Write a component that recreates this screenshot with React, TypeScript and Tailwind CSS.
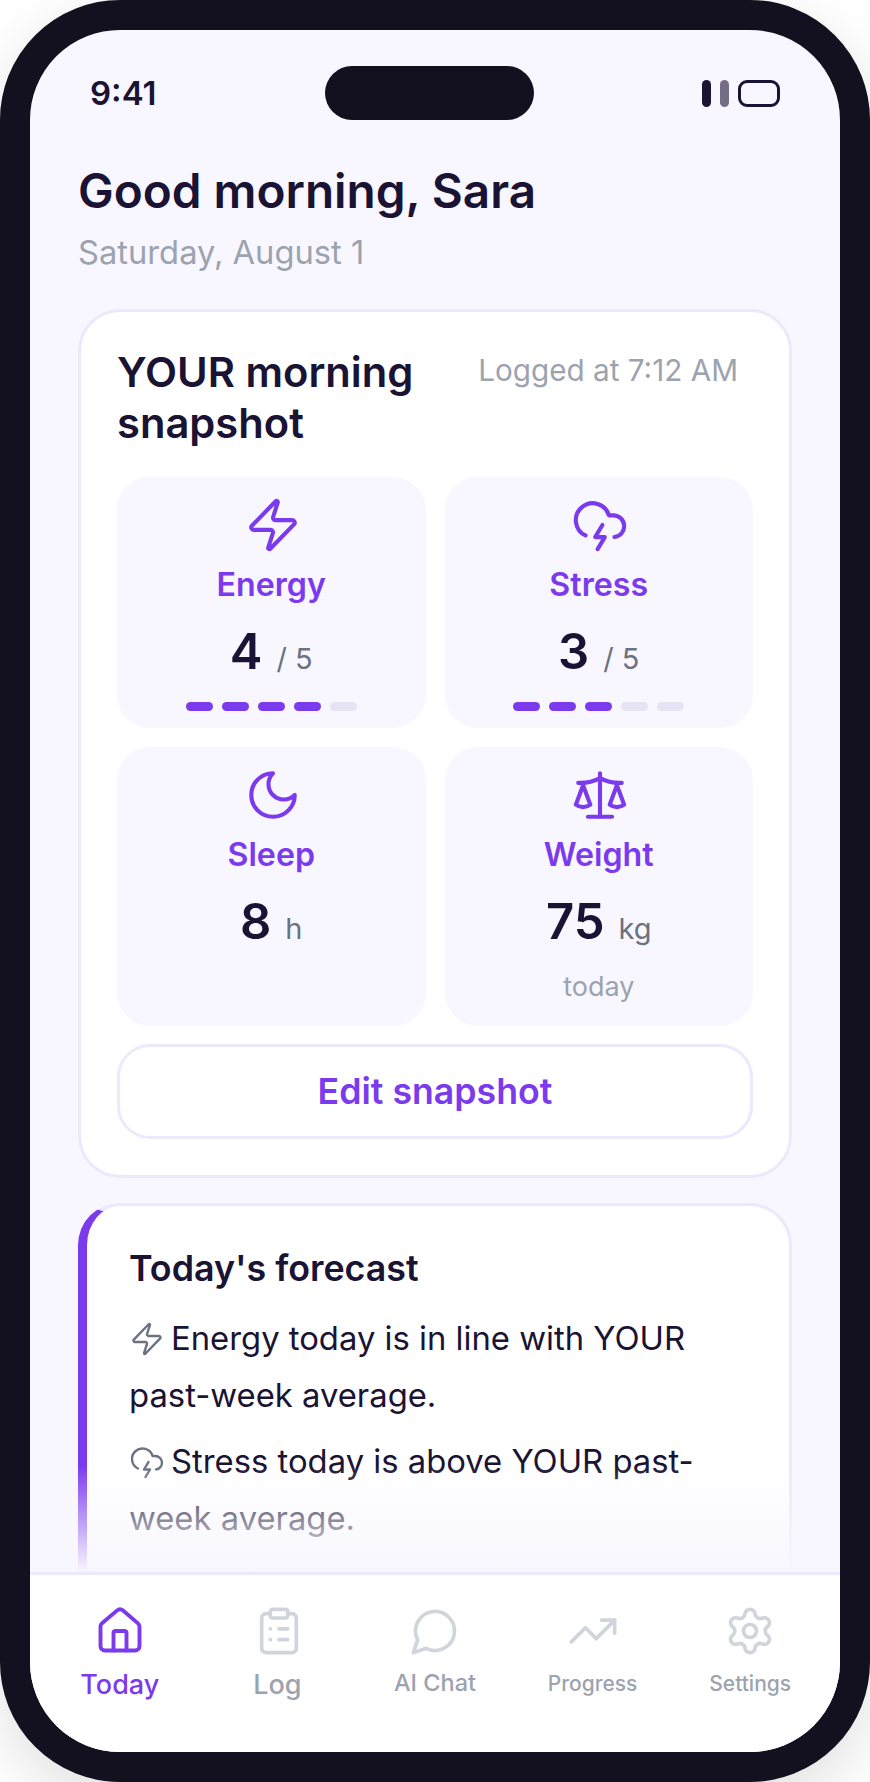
import { Zap, CloudLightning, Scale, House, ClipboardList, TrendingUp, Settings } from "lucide-react";

const font = { fontFamily: "Inter, 'Noto Sans', sans-serif" };

function CrescentIcon({ size }: { size: number }) {
  return (
    <svg width={size} height={size} viewBox="0 0 24 24" fill="none" stroke="currentColor" strokeWidth={1.7} strokeLinecap="round" strokeLinejoin="round">
      <path d="M12 3a6 6 0 0 0 9 9 9 9 0 1 1-9-9Z" />
    </svg>
  );
}

function ChatIcon({ size }: { size: number }) {
  return (
    <svg width={size} height={size} viewBox="0 0 24 24" fill="none" stroke="currentColor" strokeWidth={1.7} strokeLinecap="round" strokeLinejoin="round">
      <path d="M7.9 20A9 9 0 1 0 4 16.1L2 22Z" />
    </svg>
  );
}

function Meter({ filled }: { filled: number }) {
  return (
    <div className="flex justify-center gap-[9px] mt-[21px] pb-[17px]">
      {[0, 1, 2, 3, 4].map((i) => (
        <span
          key={i}
          className={i < filled ? "w-[27px] h-[9px] rounded-full bg-[#7c3aed]" : "w-[27px] h-[9px] rounded-full bg-[#e6e3f5]"}
        />
      ))}
    </div>
  );
}

function Tile({ icon, label, value, unit, children }: { icon: React.ReactNode; label: string; value: string; unit: string; children?: React.ReactNode }) {
  return (
    <div className="bg-[#f8f7ff] rounded-[33px] pt-[19px] flex flex-col items-center">
      <div className="h-[58px] ml-[3px] flex items-center justify-center text-[#7c3aed]">{icon}</div>
      <div className="mt-[8px] text-[32.2px] leading-[46px] font-semibold text-[#7c3aed]">{label}</div>
      <div className="mt-[15px] flex items-baseline gap-[14px] h-[58px]">
        <span className="text-[49px] leading-[58px] font-semibold text-[#1a1333]">{value}</span>
        <span className="text-[29px] leading-[40px] text-[#6b7280]">{unit}</span>
      </div>
      {children}
    </div>
  );
}

function NavItem({ icon, label, active, labelClass }: { icon: React.ReactNode; label: string; active?: boolean; labelClass: string }) {
  return (
    <div className="flex-1 flex flex-col items-center">
      <div className={active ? "h-[52px] flex items-center text-[#7c3aed]" : "h-[52px] flex items-center text-[#d1d5db]"}>{icon}</div>
      <div className={labelClass}>{label}</div>
    </div>
  );
}

export default function App() {
  return (
    <div style={font} className="w-[870px] h-[1782px] bg-white overflow-hidden">
      <div className="h-full border-[30px] border-[#13111f] rounded-[120px] shadow-[0_20px_60px_rgba(0,0,0,0.12)] bg-[#f8f7ff] overflow-hidden flex flex-col">
        {/* status bar */}
        <div className="relative h-[96px] shrink-0 flex items-center justify-between pl-[60px] pr-[60px] pt-[31px]">
          <span className="text-[33px] font-semibold text-[#1a1333]">9:41</span>
          <div className="absolute left-[295px] top-[36px] w-[209px] h-[54px] rounded-full bg-[#13111f]" />
          <div className="flex items-center">
            <span className="w-[9px] h-[27px] rounded-full bg-[#1a1333]" />
            <span className="ml-[9px] w-[9px] h-[27px] rounded-full bg-[#1a1333] opacity-60" />
            <span className="ml-[9px] w-[42px] h-[27px] rounded-[9px] border-[3px] border-[#1a1333]" />
          </div>
        </div>

        {/* scrolling content */}
        <div className="relative flex-1 min-h-0 overflow-hidden px-[48px] pt-[37px]">
          <h1 className="text-[47.7px] leading-[56px] font-semibold text-[#1a1333]">Good morning, Sara</h1>
          <p className="mt-[10px] text-[32.7px] leading-[46px] text-[#9ca3af]">Saturday, August 1</p>

          <section className="mt-[34px] bg-white border-[3px] border-[#ebe9fb] rounded-[42px] px-[36px] pt-[35px] pb-[36px]">
            <div className="flex justify-between items-start">
              <h2 className="w-[300px] text-[41.7px] leading-[51px] font-semibold text-[#1a1333]">YOUR morning snapshot</h2>
              <span className="text-[29.7px] leading-[44px] text-[#9ca3af] mr-[15px] mt-[1px]">Logged at 7:12 AM</span>
            </div>
            <div className="mt-[28px] grid grid-cols-2 gap-[19px]">
              <Tile icon={<Zap size={58} strokeWidth={1.7} />} label="Energy" value="4" unit="/ 5">
                <Meter filled={4} />
              </Tile>
              <Tile icon={<CloudLightning size={58} strokeWidth={1.7} />} label="Stress" value="3" unit="/ 5">
                <Meter filled={3} />
              </Tile>
              <Tile icon={<CrescentIcon size={58} />} label="Sleep" value="8" unit="h" />
              <Tile icon={<Scale size={58} strokeWidth={1.7} />} label="Weight" value="75" unit="kg">
                <div className="mt-[17px] pb-[20px] text-[27px] leading-[38px] text-[#9ca3af]">today</div>
              </Tile>
            </div>
            <button className="mt-[18px] w-full h-[95px] bg-white border-[3px] border-[#ebe9fb] rounded-[33px] text-[35.7px] font-semibold text-[#7c3aed]">
              Edit snapshot
            </button>
          </section>

          <section className="mt-[25px] bg-white border-[3px] border-l-[9px] border-[#ebe9fb] border-l-[#7c3aed] rounded-[42px] pl-[42px] pr-[36px] pt-[37px] h-[500px]">
            <h3 className="text-[35.8px] leading-[50px] font-semibold text-[#1a1333]">Today's forecast</h3>
            <p className="mt-[17px] text-[32.8px] leading-[57px] text-[#1a1333]">
              <Zap size={36} strokeWidth={1.6} className="inline-block align-[-7px] text-[#6b7280] mr-[6px]" />
              Energy today is in line with YOUR past-week average.
            </p>
            <p className="mt-[9px] text-[32.8px] leading-[57px] text-[#1a1333]">
              <CloudLightning size={36} strokeWidth={1.6} className="inline-block align-[-7px] text-[#6b7280] mr-[6px]" />
              Stress today is above YOUR past-week average.
            </p>
          </section>

          {/* fade above the tab bar */}
          <div className="absolute left-0 right-0 bottom-0 h-[107px] bg-gradient-to-b from-[#f8f7ff00] to-[#f8f7ff]" />
        </div>

        {/* tab bar */}
        <nav className="shrink-0 h-[180px] bg-white border-t-[3px] border-[#ebe9fb] flex px-[11px] pt-[30px]">
          <NavItem active icon={<House size={52} strokeWidth={1.8} />} label="Today" labelClass="mt-[8px] text-[27px] leading-[40px] font-medium text-[#7c3aed]" />
          <NavItem icon={<ClipboardList size={52} strokeWidth={1.7} className="ml-[3px]" />} label="Log" labelClass="mt-[8px] text-[27px] leading-[40px] font-medium text-[#9ca3af]" />
          <NavItem icon={<ChatIcon size={52} />} label="AI Chat" labelClass="mt-[7px] text-[23.5px] leading-[38px] font-medium text-[#9ca3af]" />
          <NavItem icon={<TrendingUp size={52} strokeWidth={1.7} />} label="Progress" labelClass="mt-[9px] text-[21px] leading-[36px] font-medium text-[#9ca3af]" />
          <NavItem icon={<Settings size={52} strokeWidth={1.7} />} label="Settings" labelClass="mt-[9px] text-[21px] leading-[36px] font-medium text-[#9ca3af]" />
        </nav>
      </div>
    </div>
  );
}
